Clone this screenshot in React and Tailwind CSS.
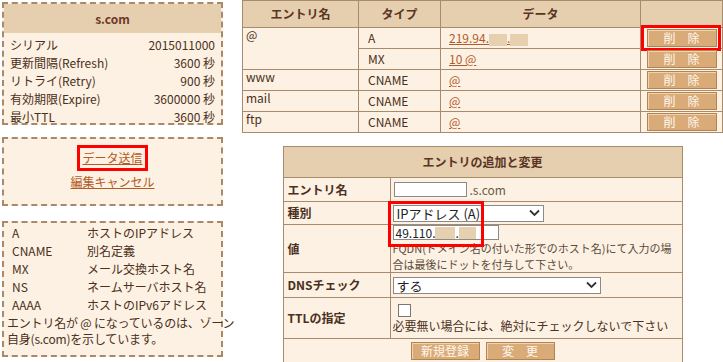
import { useState } from "react";

const soa = [
  ["シリアル", "2015011000"],
  ["更新間隔(Refresh)", "3600 秒"],
  ["リトライ(Retry)", "900 秒"],
  ["有効期限(Expire)", "3600000 秒"],
  ["最小TTL", "3600 秒"],
];

const types = [
  ["A", "ホストのIPアドレス"],
  ["CNAME", "別名定義"],
  ["MX", "メール交換ホスト名"],
  ["NS", "ネームサーバホスト名"],
  ["AAAA", "ホストのIPv6アドレス"],
];

function Mask({ w }) {
  return <span className={`inline-block h-[12px] align-middle bg-[#e6d0b0] ${w}`} />;
}

function DelButton({ marked }) {
  return (
    <div className="relative flex justify-center">
      <button className="w-[70px] h-[18px] bg-[#d9ab79] border border-[#b5834f] shadow-[inset_1px_1px_0_#f0d2ae] text-[12px] leading-none text-[#fff8ec]">
        削　除
      </button>
      {marked && (
        <div className="absolute -top-[4px] left-[0px] w-[80px] h-[26px] border-[3px] border-[#ff0000]" />
      )}
    </div>
  );
}

function App() {
  const [name, setName] = useState("");
  const [ttl, setTtl] = useState(false);

  const td = "border border-[#a88b6c] bg-[#fdf1e3]";

  return (
    <div
      className="w-[723px] h-[362px] bg-white text-[12px] text-[#4a3020] flex pt-[2px] pl-[2px]"
      style={{ fontFamily: '"Noto Sans CJK JP", "DejaVu Sans", sans-serif' }}
    >
      {/* left column */}
      <div className="w-[221px] flex flex-col">
        <div className="border-2 border-dashed border-[#a88a6a] bg-[#fdf1e3] h-[123px]">
          <div className="h-[29px] bg-[#e5cfae] flex items-center justify-center font-bold text-[#6b3a28]">
            s.com
          </div>
          <div className="pt-[3px] px-[6px]">
            {soa.map(([k, v]) => (
              <div key={k} className="flex justify-between h-[18px] items-center">
                <span>{k}</span>
                <span>{v}</span>
              </div>
            ))}
          </div>
        </div>

        <div className="mt-[12px] h-[69px] border-2 border-dashed border-[#a88a6a] bg-[#fdf1e3] flex flex-col items-center pt-[10px] gap-[6px]">
          <div className="relative">
            <a className="text-[#b35a26] underline">データ送信</a>
            <div className="absolute -top-[4px] -left-[5px] -right-[5px] -bottom-[4px] border-[3px] border-[#ff0000]" />
          </div>
          <a className="text-[#b35a26] underline">編集キャンセル</a>
        </div>

        <div className="mt-[15px] h-[136px] border-2 border-dashed border-[#a88a6a] bg-[#fdf1e3] px-[3px] pt-[1px] leading-[18px]">
          {types.map(([k, v]) => (
            <div key={k} className="flex h-[18px]">
              <span className="w-[80px] pl-[5px]">{k}</span>
              <span>{v}</span>
            </div>
          ))}
          <p className="leading-[16px] mt-[1px] whitespace-nowrap tracking-[-0.2px]">
            エントリ名が @ になっているのは、ゾーン
            <br />
            自身(s.com)を示しています。
          </p>
        </div>
      </div>

      {/* right column */}
      <div className="flex-1 ml-[19px] -mt-[2px] flex flex-col items-center">
        <table className="w-[481px] border-collapse">
          <thead>
            <tr className="h-[27px] bg-[#e5cfae] font-bold text-[#5a3424]">
              <th className="border border-[#a88b6c] w-[116px]">エントリ名</th>
              <th className="border border-[#a88b6c] w-[82px]">タイプ</th>
              <th className="border border-[#a88b6c] w-[200px]">データ</th>
              <th className="border border-[#a88b6c]"></th>
            </tr>
          </thead>
          <tbody>
            <tr className="h-[21px]">
              <td rowSpan={2} className={`${td} align-top pl-[3px] leading-[14px]`}>@</td>
              <td className={`${td} pl-[9px]`}>A</td>
              <td className={`${td} pl-[8px]`}>
                <a className="text-[#b35a26] underline whitespace-nowrap">
                  219.94.<Mask w="w-[18px]" />.<Mask w="w-[18px]" />
                </a>
              </td>
              <td className={td}><DelButton marked /></td>
            </tr>
            <tr className="h-[21px]">
              <td className={`${td} pl-[9px]`}>MX</td>
              <td className={`${td} pl-[8px]`}><a className="text-[#b35a26] underline">10 @</a></td>
              <td className={td}><DelButton /></td>
            </tr>
            {["www", "mail", "ftp"].map((n) => (
              <tr key={n} className="h-[21px]">
                <td className={`${td} align-top pl-[3px] leading-[14px]`}>{n}</td>
                <td className={`${td} pl-[9px]`}>CNAME</td>
                <td className={`${td} pl-[8px]`}><a className="text-[#b35a26] underline">@</a></td>
                <td className={td}><DelButton /></td>
              </tr>
            ))}
          </tbody>
        </table>

        <div className="relative mt-[13px]">
          <table className="w-[400px] border-collapse table-fixed">
            <colgroup>
              <col className="w-[107px]" />
              <col />
            </colgroup>
            <thead>
              <tr className="h-[31px] bg-[#e5cfae]">
                <th colSpan={2} className="border border-[#a88b6c] font-bold text-[#5a3424]">
                  エントリの追加と変更
                </th>
              </tr>
            </thead>
            <tbody>
              <tr className="h-[24px]">
                <td className={`${td} font-bold pl-[4px]`}>エントリ名</td>
                <td className={`${td} pl-[3px]`}>
                  <div className="flex items-center gap-[3px]">
                    <input
                      value={name}
                      onChange={(e) => setName(e.target.value)}
                      className="w-[73px] h-[15px] bg-white border border-[#8a8a8a] outline-none"
                    />
                    <span className="text-[#6a5a4a]">.s.com</span>
                  </div>
                </td>
              </tr>
              <tr className="h-[23px]">
                <td className={`${td} font-bold pl-[4px]`}>種別</td>
                <td className={`${td} pl-[2px]`}>
                  <div className="w-[151px] h-[17px] bg-white border border-[#8a8a8a] flex items-center justify-between px-[3px]">
                    <span className="text-[#222] text-[13px] leading-none">IPアドレス (A)</span>
                    <svg width="11" height="8" viewBox="0 0 11 8">
                      <path d="M1 1.5 L5.5 6 L10 1.5" stroke="#333" strokeWidth="1.8" fill="none" />
                    </svg>
                  </div>
                </td>
              </tr>
              <tr className="h-[48px]">
                <td className={`${td} font-bold pl-[4px]`}>値</td>
                <td className={`${td} pl-[2px]`}>
                  <div className="w-[106px] h-[15px] bg-white border border-[#8a8a8a] flex items-center px-[2px] text-[#222] whitespace-nowrap">
                    49.110.<Mask w="w-[20px]" />.<Mask w="w-[17px]" />
                  </div>
                  <p className="text-[11px] leading-[16px] text-[#5a4a3a] whitespace-nowrap">
                    FQDN(ドメイン名の付いた形でのホスト名)にて入力の場
                    <br />
                    合は最後にドットを付与して下さい。
                  </p>
                </td>
              </tr>
              <tr className="h-[25px]">
                <td className={`${td} font-bold pl-[4px]`}>DNSチェック</td>
                <td className={`${td} pl-[2px]`}>
                  <div className="w-[208px] h-[17px] bg-white border border-[#8a8a8a] flex items-center justify-between px-[3px]">
                    <span className="text-[#222] text-[13px] leading-none">する</span>
                    <svg width="11" height="8" viewBox="0 0 11 8">
                      <path d="M1 1.5 L5.5 6 L10 1.5" stroke="#333" strokeWidth="1.8" fill="none" />
                    </svg>
                  </div>
                </td>
              </tr>
              <tr className="h-[41px]">
                <td className={`${td} font-bold pl-[4px]`}>TTLの指定</td>
                <td className={`${td} pl-[2px]`}>
                  <div
                    onClick={() => setTtl(!ttl)}
                    className="ml-[5px] w-[13px] h-[13px] bg-white border border-[#777]"
                  />
                  <p className="mt-[3px] leading-[12px]">必要無い場合には、絶対にチェックしないで下さい</p>
                </td>
              </tr>
              <tr className="h-[24px]">
                <td colSpan={2} className={td}>
                  <div className="flex justify-center gap-[6px]">
                    <button className="w-[69px] h-[18px] bg-[#d9ab79] border border-[#b5834f] shadow-[inset_1px_1px_0_#f0d2ae] text-[12px] leading-none text-[#fff8ec]">
                      新規登録
                    </button>
                    <button className="w-[69px] h-[18px] bg-[#d9ab79] border border-[#b5834f] shadow-[inset_1px_1px_0_#f0d2ae] text-[12px] leading-none text-[#fff8ec]">
                      変　更
                    </button>
                  </div>
                </td>
              </tr>
            </tbody>
          </table>
          <div className="absolute top-[55px] left-[105px] w-[96px] h-[46px] border-[3px] border-[#ff0000]" />
        </div>
      </div>
    </div>
  );
}

export default App;
